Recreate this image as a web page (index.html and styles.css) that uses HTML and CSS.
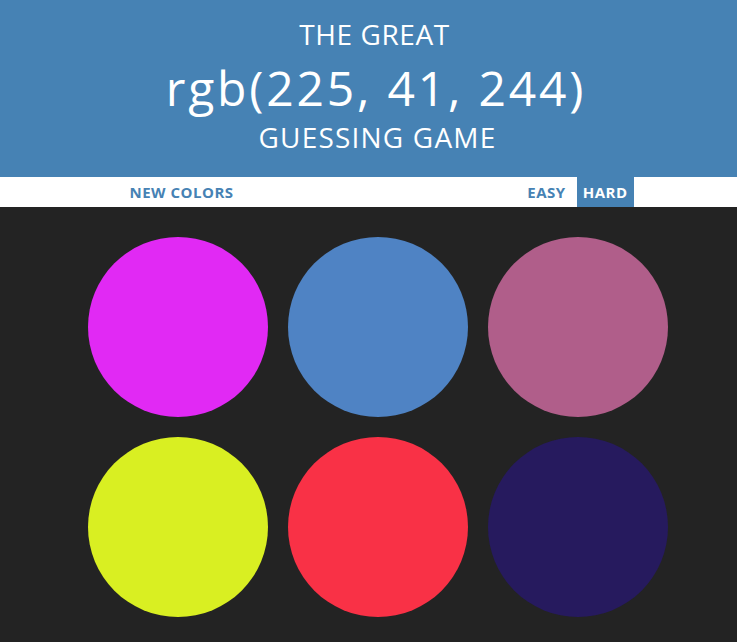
FILE: index.html
```html
<!DOCTYPE html>
<html>
<head>
<meta charset="utf-8">
<link rel="stylesheet" href="styles.css">
</head>
<body>
<header class="hero">
  <div class="hero-line">THE GREAT</div>
  <div class="hero-rgb">rgb(225, 41, 244)</div>
  <div class="hero-line hero-wide">GUESSING GAME</div>
</header>
<nav class="bar">
  <div class="bar-inner">
    <button class="btn btn-new">NEW COLORS</button>
    <span class="msg"></span>
    <div class="modes">
      <button class="btn">EASY</button>
      <button class="btn selected">HARD</button>
    </div>
  </div>
</nav>
<main class="board">
  <div class="grid">
    <div class="square c1"></div>
    <div class="square c2"></div>
    <div class="square c3"></div>
    <div class="square c4"></div>
    <div class="square c5"></div>
    <div class="square c6"></div>
  </div>
</main>
</body>
</html>
```
FILE: styles.css
```css
html, body {
  margin: 0;
  padding: 0;
  background: #232323;
  font-family: "Open Sans", "Liberation Sans", sans-serif;
}
.hero {
  background: #4682b4;
  color: #fff;
  text-align: center;
  padding: 15px 0 20px 12px;
}
.hero-line {
  font-size: 28px;
  line-height: 39px;
  letter-spacing: 0.6px;
}
.hero-wide {
  letter-spacing: 1.2px;
  padding-left: 6px;
}
.hero-rgb {
  font-size: 48px;
  line-height: 61px;
  padding-top: 3px;
  padding-left: 3px;
  letter-spacing: 2.8px;
}
.bar {
  background: #fff;
  height: 30px;
}
.bar-inner {
  width: 600px;
  margin: 0 auto;
  padding-left: 20px;
  display: flex;
  align-items: stretch;
  height: 30px;
}
.btn {
  border: none;
  background: none;
  color: #4682b4;
  font-family: "Open Sans", "Liberation Sans", sans-serif;
  font-weight: 700;
  font-size: 15px;
  letter-spacing: 0.5px;
  padding: 0 6px;
  height: 30px;
  text-transform: uppercase;
}
.btn-new {
  margin-left: 45px;
}
.msg { flex: 1; }
.modes {
  display: flex;
  gap: 5px;
  margin-right: 45px;
}
.selected {
  background: #4682b4;
  color: #fff;
}
.board {
  padding-top: 20px;
}
.grid {
  width: 600px;
  margin: 0 auto;
  padding-left: 19px;
  display: grid;
  grid-template-columns: repeat(3, 180px);
  gap: 20px;
  padding-top: 10px;
  box-sizing: content-box;
  justify-content: center;
}
.square {
  width: 180px;
  height: 180px;
  border-radius: 50%;
}
.c1 { background: rgb(225, 41, 244); }
.c2 { background: rgb(79, 131, 196); }
.c3 { background: rgb(176, 94, 138); }
.c4 { background: rgb(217, 239, 34); }
.c5 { background: rgb(249, 49, 70); }
.c6 { background: rgb(38, 26, 94); }
```
